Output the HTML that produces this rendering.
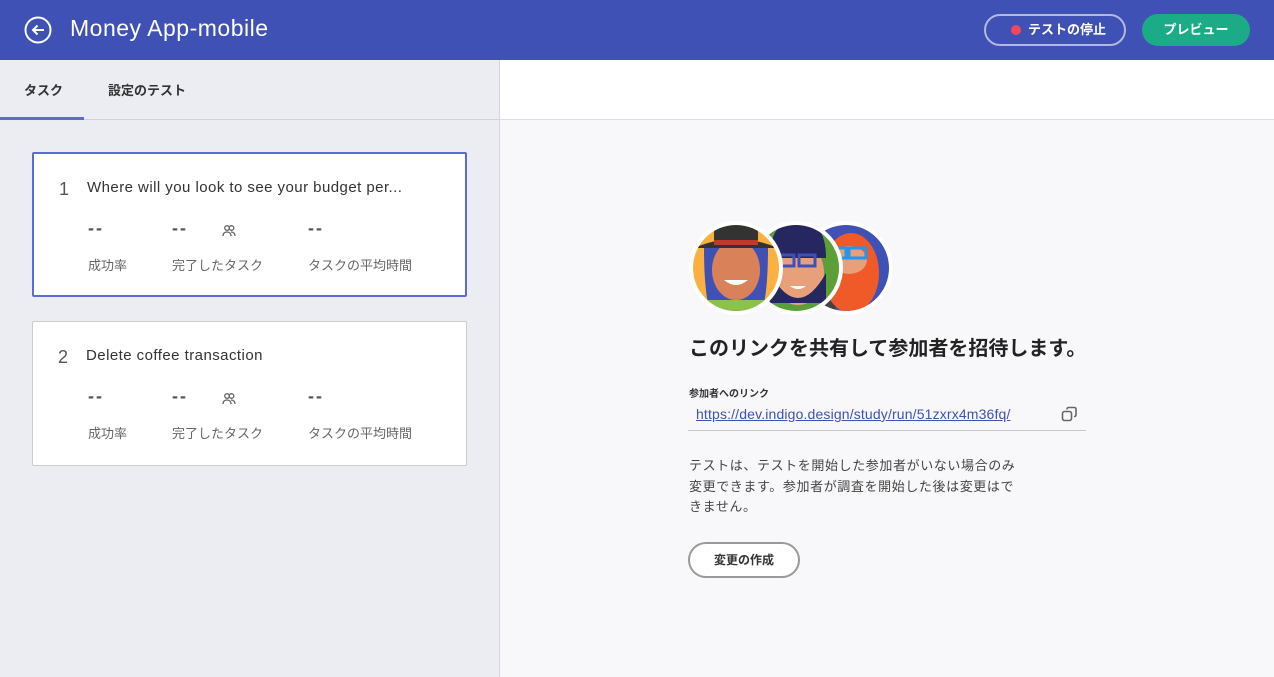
<!DOCTYPE html>
<html><head><meta charset="utf-8"><style>
*{box-sizing:border-box;margin:0;padding:0}
body{width:1274px;height:677px;overflow:hidden;font-family:"Liberation Sans","Noto Sans CJK JP",sans-serif;background:#f8f8fa;position:relative;color:#333}
.hdr{position:absolute;left:0;top:0;width:1274px;height:60px;background:#3f51b5;color:#fff}
.title{position:absolute;left:70px;top:15px;font-size:23px;color:#fff;letter-spacing:0.5px}
.btn1{position:absolute;left:984px;top:14px;width:142px;height:32px;border:2px solid rgba(255,255,255,.6);border-radius:16px;color:#fff;font-weight:bold;font-size:13px;line-height:28px;padding-left:42px}
.btn1:before{content:"";position:absolute;left:25px;top:9px;width:10px;height:10px;border-radius:50%;background:#f0475c}
.btn2{position:absolute;left:1142px;top:14px;width:108px;height:32px;border-radius:16px;background:#1bab87;color:#fff;font-weight:bold;font-size:13px;line-height:32px;text-align:center}
.left{position:absolute;left:0;top:60px;width:500px;height:617px;background:#ecedf2;border-right:1px solid #d6d6dc}
.tabs{height:60px;border-bottom:1px solid #d0d0d6;position:relative}
.tab{position:absolute;top:20px;font-size:13px;font-weight:bold;color:#333}
.ul{position:absolute;left:0;bottom:-1px;width:84px;height:3px;background:#5c6bd6}
.rtop{position:absolute;left:500px;top:60px;width:774px;height:60px;background:#fff;border-bottom:1px solid #ddd}
.card{position:absolute;left:32px;width:435px;height:145px;background:#fff;border:1px solid #ccc;border-radius:2px}
.card.a{border:2px solid #5c6bd6}
.num{position:absolute;left:25px;top:25px;font-size:18px;color:#555}
.ct{position:absolute;left:53px;top:25px;font-size:15px;color:#333;letter-spacing:0.45px}
.dash{position:absolute;top:64px;font-size:18px;color:#555;letter-spacing:2px;font-weight:bold}
.lab{position:absolute;top:101px;font-size:13px;color:#666}
h2{position:absolute;left:689px;top:332px;font-size:20px;font-weight:bold;color:#222}
.sm{position:absolute;left:689px;top:385px;font-size:10px;font-weight:bold;color:#333}
.link{position:absolute;left:696px;top:406px;font-size:14px;color:#3f51b5;text-decoration:underline;letter-spacing:0.15px}
.line{position:absolute;left:688px;top:430px;width:398px;height:1px;background:#c8c8cc}
.p{position:absolute;left:689px;top:456px;font-size:13px;line-height:20.5px;color:#444;width:360px;letter-spacing:0.6px}
.btn3{position:absolute;left:688px;top:542px;width:112px;height:36px;border:2px solid #999;border-radius:18px;font-size:12px;font-weight:bold;text-align:center;line-height:32px;color:#333;background:#fff}
</style></head><body>
<div class="hdr">
<svg style="position:absolute;left:24px;top:16px" width="28" height="28" viewBox="0 0 28 28"><circle cx="14" cy="14" r="12.5" fill="none" stroke="#fff" stroke-width="2"/><path d="M20 14H9M13.5 9.5L9 14l4.5 4.5" fill="none" stroke="#fff" stroke-width="2"/></svg>
<div class="title">Money App-mobile</div>
<div class="btn1">テストの停止</div>
<div class="btn2">プレビュー</div>
</div>
<div class="left">
<div class="tabs"><div class="tab" style="left:24px">タスク</div><div class="tab" style="left:108px">設定のテスト</div><div class="ul"></div></div>
</div>
<div class="rtop"></div>
<div class="card a" style="top:152px">
<div class="num">1</div><div class="ct">Where will you look to see your budget per...</div>
<div class="dash" style="left:54px">--</div><div class="dash" style="left:138px">--</div><div class="dash" style="left:274px">--</div>
<svg style="position:absolute;left:188px;top:70px" width="14" height="14" viewBox="0 0 14 14" fill="none" stroke="#666" stroke-width="1.3"><circle cx="5" cy="4" r="2.3"/><circle cx="9.5" cy="4" r="2.3"/><path d="M1 12c0-3 2-4 4-4s4 1 4 4M9 8c2 0 4 1 4 4"/></svg>
<div class="lab" style="left:54px">成功率</div><div class="lab" style="left:138px">完了したタスク</div><div class="lab" style="left:274px">タスクの平均時間</div>
</div>
<div class="card" style="top:321px">
<div class="num">2</div><div class="ct">Delete coffee transaction</div>
<div class="dash" style="left:55px">--</div><div class="dash" style="left:139px">--</div><div class="dash" style="left:275px">--</div>
<svg style="position:absolute;left:189px;top:70px" width="14" height="14" viewBox="0 0 14 14" fill="none" stroke="#666" stroke-width="1.3"><circle cx="5" cy="4" r="2.3"/><circle cx="9.5" cy="4" r="2.3"/><path d="M1 12c0-3 2-4 4-4s4 1 4 4M9 8c2 0 4 1 4 4"/></svg>
<div class="lab" style="left:55px">成功率</div><div class="lab" style="left:139px">完了したタスク</div><div class="lab" style="left:275px">タスクの平均時間</div>
</div>
<svg style="position:absolute;left:686px;top:218px" width="212" height="100" viewBox="0 0 212 100">
<defs><clipPath id="c3"><circle cx="160" cy="50" r="43"/></clipPath><clipPath id="c2"><circle cx="110" cy="50" r="43"/></clipPath><clipPath id="c1"><circle cx="50" cy="50" r="43"/></clipPath></defs>
<circle cx="160" cy="50" r="47" fill="#fff"/>
<g clip-path="url(#c3)"><rect x="110" y="0" width="100" height="100" fill="#3f51b5"/><rect x="110" y="60" width="40" height="40" fill="#444"/><ellipse cx="165" cy="55" rx="28" ry="40" fill="#f05a28"/><ellipse cx="163" cy="42" rx="18" ry="14" fill="#e8a07a"/><rect x="143" y="30" width="17" height="10" fill="none" stroke="#2196f3" stroke-width="3"/><rect x="163" y="30" width="17" height="10" fill="none" stroke="#2196f3" stroke-width="3"/></g>
<circle cx="110" cy="50" r="47" fill="#fff"/>
<g clip-path="url(#c2)"><rect x="60" y="0" width="100" height="100" fill="#5c9e38"/><ellipse cx="112" cy="55" rx="26" ry="32" fill="#e8a07a"/><path d="M84 55q28 50 56 0v30H84z" fill="#262660"/><path d="M84 40q0-38 28-38t28 38z" fill="#262660"/><rect x="92" y="37" width="16" height="11" fill="none" stroke="#3f51b5" stroke-width="3"/><rect x="113" y="37" width="16" height="11" fill="none" stroke="#3f51b5" stroke-width="3"/><path d="M104 68q8 6 16 0z" fill="#fff"/></g>
<circle cx="50" cy="50" r="47" fill="#fff"/>
<g clip-path="url(#c1)"><rect x="0" y="0" width="100" height="100" fill="#fbb040"/><path d="M18 30q0 50 8 70h48q8-20 8-70z" fill="#3f51b5"/><ellipse cx="50" cy="52" rx="24" ry="30" fill="#d9825a"/><rect x="20" y="82" width="60" height="20" fill="#8bc34a"/><path d="M8 30q42-18 84 0z" fill="#333"/><rect x="28" y="6" width="44" height="24" rx="8" fill="#333"/><rect x="28" y="22" width="44" height="5" fill="#c0392b"/><path d="M38 62q12 10 24 0z" fill="#fff"/></g>
</svg>
<h2>このリンクを共有して参加者を招待します。</h2>
<div class="sm">参加者へのリンク</div>
<div class="link">https://dev.indigo.design/study/run/51zxrx4m36fq/</div>
<svg style="position:absolute;left:1061px;top:406px" width="17" height="17" viewBox="0 0 17 17" fill="none" stroke="#666" stroke-width="1.6"><rect x="1.5" y="5.5" width="9" height="9" rx="2"/><path d="M6 3.5V3a1.5 1.5 0 0 1 1.5-1.5h6A1.5 1.5 0 0 1 15 3v6a1.5 1.5 0 0 1-1.5 1.5H13"/></svg>
<div class="line"></div>
<div class="p">テストは、テストを開始した参加者がいない場合のみ<br>変更できます。参加者が調査を開始した後は変更はで<br>きません。</div>
<div class="btn3">変更の作成</div>
</body></html>
